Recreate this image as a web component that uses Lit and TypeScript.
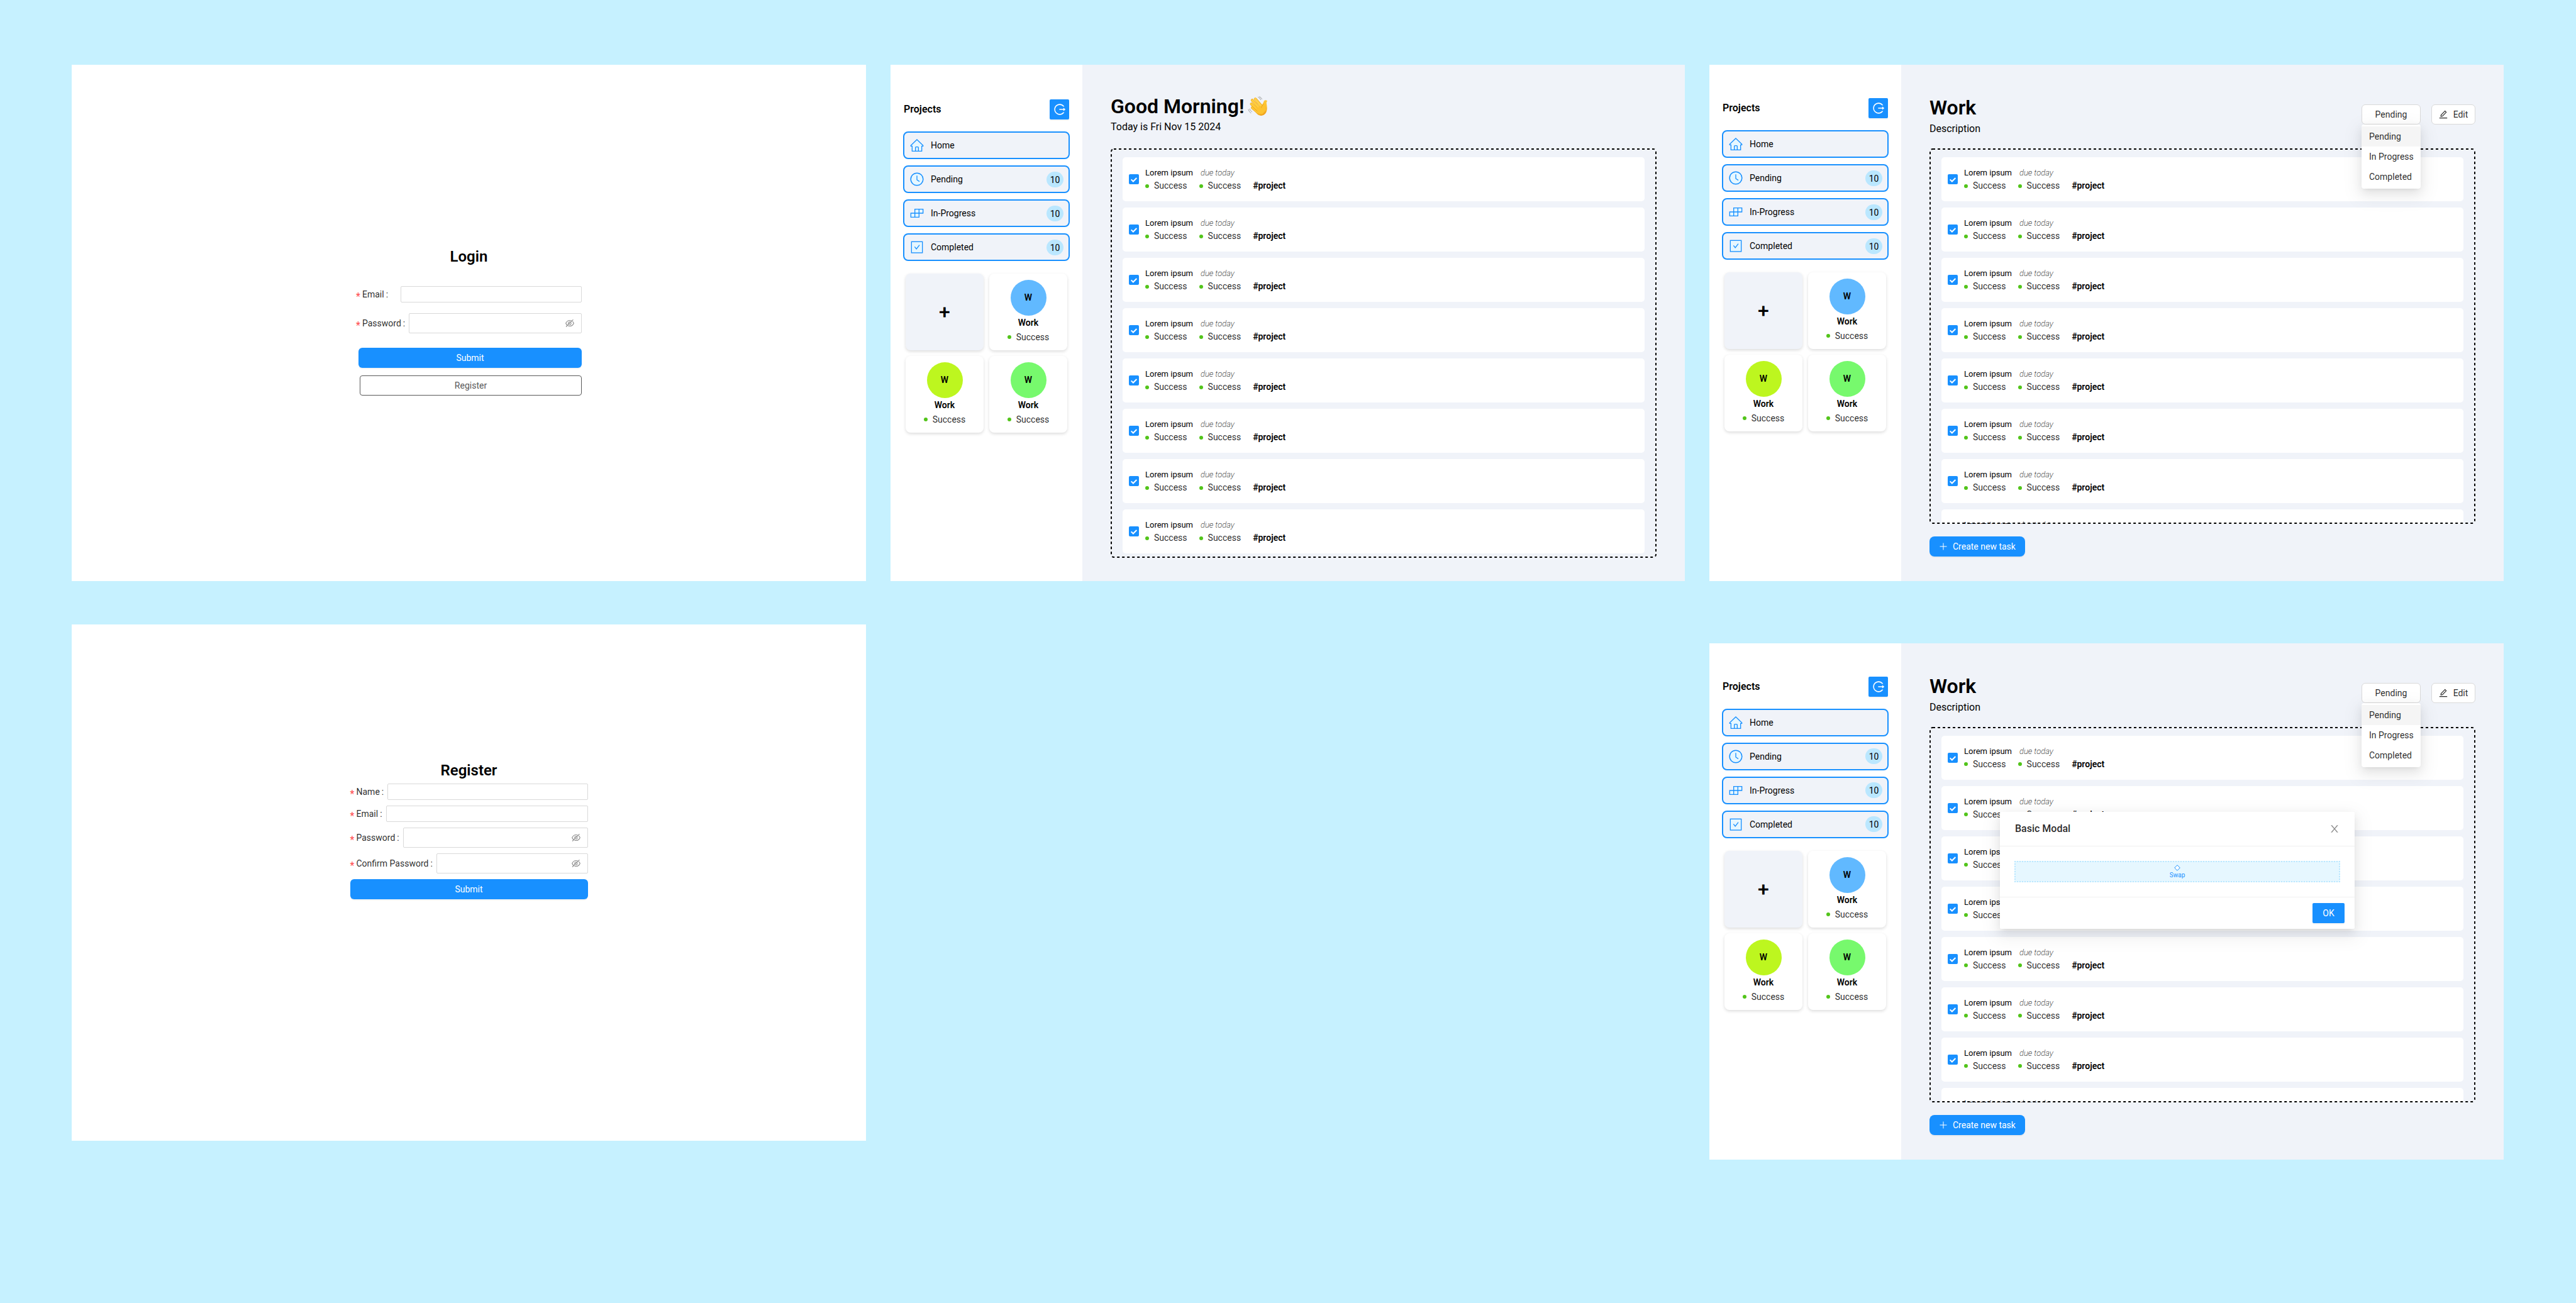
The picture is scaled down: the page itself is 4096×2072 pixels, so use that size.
import { LitElement, html, css, svg, nothing } from "lit";
import { customElement, property } from "lit/decorators.js";
import { classMap } from "lit/directives/class-map.js";

const base = css`
  *,
  *::before,
  *::after {
    box-sizing: border-box;
  }
  :host {
    display: block;
    font-family: Roboto, "Liberation Sans", sans-serif;
    font-size: 14px;
    line-height: 22px;
    color: #000;
  }
  h1,
  h2,
  h3,
  p,
  ul {
    margin: 0;
    padding: 0;
  }
  ul {
    list-style: none;
  }
  button,
  input {
    margin: 0;
    padding: 0;
    font: inherit;
    color: inherit;
    background: none;
    border: 0;
  }
  svg {
    display: block;
    flex: none;
  }
  .button {
    height: 32px;
    display: flex;
    align-items: center;
    justify-content: center;
    border-radius: 6px;
  }
  .primary {
    background: #1890ff;
    color: #fff;
    box-shadow: 0 2px 0 rgba(0, 0, 0, 0.04);
  }
`;

/* Icons on the 1024 unit grid */
const glyph = (d: string, size: number) => html`<svg
  width=${size}
  height=${size}
  viewBox="64 64 896 896"
  fill="currentColor"
  aria-hidden="true"
>
  <path d=${d}></path>
</svg>`;

const EYE_OFF =
  "M942.2 486.2Q889.47 375.11 816.7 305l-50.88 50.88C807.31 395.53 843.45 447.4 874.7 512 791.5 684.2 673.4 766 512 766q-72.67 0-133.87-22.38L323 798.75Q408 838 512 838q288.3 0 430.2-300.3a60.29 60.29 0 000-51.5zm-63.57-320.64L836 122.88a8 8 0 00-11.32 0L715.31 232.2Q624.86 186 512 186q-288.3 0-430.2 300.3a60.3 60.3 0 000 51.5q56.69 119.4 136.5 191.41L112.48 835a8 8 0 000 11.31L155.17 889a8 8 0 0011.31 0l712.15-712.12a8 8 0 000-11.32zM149.3 512C232.6 339.8 350.7 258 512 258c54.54 0 104.13 9.36 149.12 28.39l-70.3 70.3a176 176 0 00-238.13 238.13l-83.42 83.42C223.1 637.49 183.3 582.28 149.3 512zm246.7 0a112.11 112.11 0 01146.2-106.69L401.31 546.2A112 112 0 01396 512z M508 624c-3.46 0-6.87-.16-10.25-.47l-52.82 52.82a176.09 176.09 0 00227.42-227.42l-52.82 52.82c.31 3.38.47 6.79.47 10.25a111.94 111.94 0 01-112 112z";
const EDIT =
  "M257.7 752c2 0 4-.2 6-.5L431.9 722c2-.4 3.9-1.3 5.3-2.8l423.9-423.9a9.96 9.96 0 000-14.1L694.9 114.9c-1.9-1.9-4.4-2.9-7.1-2.9s-5.2 1-7.1 2.9L256.8 538.8c-1.5 1.5-2.4 3.3-2.8 5.3l-29.5 168.2a33.5 33.5 0 009.4 29.8c6.6 6.4 14.9 9.9 23.8 9.9zm67.4-174.4L687.8 215l73.3 73.3-362.7 362.6-88.9 15.7 15.6-89zM880 836H144c-17.7 0-32 14.3-32 32v36c0 4.4 3.6 8 8 8h784c4.4 0 8-3.6 8-8v-36c0-17.7-14.3-32-32-32z";
const CLOSE =
  "M563.8 512l262.5-312.9c4.4-5.2.7-13.1-6.1-13.1h-79.8c-4.7 0-9.2 2.1-12.3 5.7L511.6 449.8 295.1 191.7c-3-3.6-7.5-5.7-12.3-5.7H203c-6.8 0-10.5 7.9-6.1 13.1L459.4 512 196.9 824.9A7.95 7.95 0 00203 838h79.8c4.7 0 9.2-2.1 12.3-5.7l216.5-258.1 216.5 258.1c3 3.6 7.5 5.7 12.3 5.7h79.8c6.8 0 10.5-7.9 6.1-13.1L563.8 512z";
const LOGOUT =
  "M868 732h-70.3c-4.8 0-9.3 2.1-12.3 5.8-7 8.5-14.5 16.7-22.4 24.5a353.84 353.84 0 01-112.7 75.9A352.8 352.8 0 01512.4 866c-47.9 0-94.3-9.4-137.9-27.8a353.84 353.84 0 01-112.7-75.9 353.28 353.28 0 01-76-112.5C167.3 606.2 158 559.9 158 512s9.4-94.2 27.8-137.8c17.8-42.1 43.4-80 76-112.5s70.5-58.1 112.7-75.9c43.6-18.4 90-27.8 137.9-27.8 47.9 0 94.3 9.3 137.9 27.8 42.2 17.8 80.1 43.4 112.7 75.9 7.9 7.9 15.3 16.1 22.4 24.5 3 3.7 7.6 5.8 12.3 5.8H868c6.3 0 10.2-7 6.7-12.3C798 160.5 663.8 81.6 511.3 82 271.7 82.6 79.6 277.1 82 516.4 84.4 751.9 276.2 942 512.4 942c152.1 0 285.7-78.8 362.3-197.7 3.4-5.3-.4-12.3-6.7-12.3zm88.9-226.3L815 393.7c-5.3-4.2-13-.4-13 6.3v76H488c-4.4 0-8 3.6-8 8v56c0 4.4 3.6 8 8 8h314v76c0 6.7 7.8 10.5 13 6.3l141.9-112a8 8 0 000-12.6z";

/* Two-tone navigation icons on a 72 unit grid */
const NAV_ICONS: Record<string, unknown> = {
  home: svg`<path d="M36 9L65 37V40H59V64H13V40H7V37Z" fill="#e6f7ff" stroke="#1890ff" stroke-width="4"/>
    <path d="M29 64V47Q29 44 32 44H40Q43 44 43 47V64" fill="none" stroke="#1890ff" stroke-width="4"/>`,
  clock: svg`<circle cx="36" cy="36" r="29.5" fill="#e6f7ff" stroke="#1890ff" stroke-width="4.5"/>
    <path d="M36 19V39L48 47" fill="none" stroke="#1890ff" stroke-width="4"/>`,
  blocks: svg`<path d="M26 17H65V36H46V55H7V36H26Z" fill="#e6f7ff" stroke="#1890ff" stroke-width="4"/>
    <path d="M46 17V36H26V55" fill="none" stroke="#1890ff" stroke-width="4"/>`,
  check: svg`<rect x="10" y="10" width="52" height="53" fill="#e6f7ff" stroke="#1890ff" stroke-width="4"/>
    <path d="M25 34L33.500 45L48 26" fill="none" stroke="#1890ff" stroke-width="4"/>`,
};

const NAV = [
  { icon: "home", label: "Home", count: 0 },
  { icon: "clock", label: "Pending", count: 10 },
  { icon: "blocks", label: "In-Progress", count: 10 },
  { icon: "check", label: "Completed", count: 10 },
];

@customElement("auth-form")
class AuthForm extends LitElement {
  @property() heading = "";
  @property() variant = "login";

  static styles = [
    base,
    css`
      .page {
        aspect-ratio: 1280 / 832;
        min-height: 0;
        background: #fff;
        display: flex;
        justify-content: center;
        align-items: flex-start;
      }
      form {
        display: flex;
        flex-direction: column;
      }
      .login {
        width: 359px;
        padding-top: 291px;
      }
      .register {
        width: 378px;
        padding-top: 218px;
      }
      h2 {
        font-size: 24px;
        line-height: 28px;
        font-weight: 600;
        text-align: center;
      }
      .fields {
        display: flex;
        flex-direction: column;
      }
      .login .fields {
        gap: 17px;
        margin: 33px 0 23px;
      }
      .register .fields {
        gap: 9px;
        margin: 7px 0 9px;
      }
      .field {
        display: flex;
        align-items: center;
        gap: 6px;
      }
      .field label {
        display: flex;
        align-items: center;
        color: rgba(0, 0, 0, 0.85);
      }
      .mark {
        width: 10px;
        height: 14px;
        font-size: 16px;
        color: #ff4d4f;
      }
      .colon {
        margin-left: 3px;
      }
      .login .short label {
        padding-right: 14px;
      }
      .box {
        flex: 1;
        min-width: 0;
        height: 26px;
        display: flex;
        align-items: center;
        border: 1px solid #d9d9d9;
        border-radius: 2px;
        padding: 0 11px;
      }
      .box.tall {
        height: 32px;
      }
      .box input {
        flex: 1;
        min-width: 0;
        height: 22px;
        outline: 0;
      }
      .eye {
        color: rgba(0, 0, 0, 0.45);
      }
      .actions {
        display: flex;
        flex-direction: column;
        gap: 12px;
      }
      .login .actions .primary {
        margin-left: 4px;
      }
      .outline {
        margin-left: 6px;
        border: 1px solid #595959;
        border-radius: 4px;
        color: #595959;
      }
    `,
  ];

  private field(name: string, secret: boolean) {
    const id = name.toLowerCase().replace(" ", "-");
    return html`<div class=${classMap({ field: true, short: !secret })}>
      <label for=${id}><span class="mark">*</span>${name}<span class="colon">:</span></label>
      <div class=${classMap({ box: true, tall: secret })}>
        <input id=${id} type=${secret ? "password" : "text"} required />
        ${secret
          ? html`<button class="eye" type="button" aria-label="Show password">${glyph(EYE_OFF, 14)}</button>`
          : nothing}
      </div>
    </div>`;
  }

  render() {
    const login = this.variant === "login";
    return html`<section class="page">
      <form class=${this.variant} @submit=${(e: Event) => e.preventDefault()}>
        <h2>${this.heading}</h2>
        <div class="fields">
          ${login ? nothing : this.field("Name", false)} ${this.field("Email", false)}
          ${this.field("Password", true)} ${login ? nothing : this.field("Confirm Password", true)}
        </div>
        <div class="actions">
          <button class="button primary" type="submit">Submit</button>
          ${login ? html`<button class="button outline" type="button">Register</button>` : nothing}
        </div>
      </form>
    </section>`;
  }
}

@customElement("project-sidebar")
class ProjectSidebar extends LitElement {
  static styles = [
    base,
    css`
      :host {
        flex: none;
        width: 305px;
        background: #fff;
      }
      .inner {
        padding: var(--sidebar-top, 55px) 20px 0;
      }
      header {
        display: flex;
        justify-content: space-between;
        align-items: center;
        padding: 0 1px;
      }
      h2 {
        font-size: 16px;
        line-height: 20px;
        font-weight: 600;
      }
      .logout {
        width: 31px;
        border-radius: 2px;
      }
      nav {
        display: flex;
        flex-direction: column;
        gap: 10px;
        margin-top: 19px;
      }
      nav a {
        height: 44px;
        display: flex;
        align-items: center;
        gap: 10px;
        padding: 0 8px;
        border: 2px solid #1890ff;
        border-radius: 8px;
        background: #f0f3f9;
        color: #000;
        text-decoration: none;
      }
      .label {
        flex: 1;
      }
      .count {
        width: 27px;
        height: 25px;
        line-height: 26px;
        border-radius: 13px;
        background: #bae7ff;
        text-align: center;
      }
      .cards {
        display: grid;
        grid-template-columns: 1fr 1fr;
        gap: 9px;
        margin: 20px 4px 0;
      }
      .card {
        height: 122px;
        padding-top: 10px;
        display: flex;
        flex-direction: column;
        align-items: center;
        border-radius: 8px;
        background: #fff;
        box-shadow: 0 2px 5px rgba(0, 0, 0, 0.14);
      }
      .add {
        padding: 0;
        justify-content: center;
        background: #f0f3f9;
        font-size: 32px;
        font-weight: 500;
      }
      .avatar {
        width: 57px;
        height: 57px;
        line-height: 57px;
        border-radius: 50%;
        text-align: center;
        font-weight: 600;
      }
      .blue {
        background: #61b9ff;
      }
      .lime {
        background: #bdf61f;
      }
      .green {
        background: #77f96d;
      }
      h3 {
        font-size: 14px;
        line-height: 22px;
        font-weight: 600;
      }
      .status {
        display: flex;
        align-items: center;
        gap: 8px;
        line-height: 24px;
        color: rgba(0, 0, 0, 0.85);
      }
      .dot {
        width: 6px;
        height: 6px;
        border-radius: 50%;
        background: #52c41a;
      }
    `,
  ];

  render() {
    return html`<div class="inner">
      <header>
        <h2>Projects</h2>
        <button class="button primary logout" aria-label="Log out">${glyph(LOGOUT, 18)}</button>
      </header>
      <nav>
        ${NAV.map(
          (n) => html`<a href="#">
            <svg width="24" height="24" viewBox="0 0 72 72" aria-hidden="true">${NAV_ICONS[n.icon]}</svg>
            <span class="label">${n.label}</span>
            ${n.count ? html`<span class="count">${n.count}</span>` : nothing}
          </a>`
        )}
      </nav>
      <div class="cards">
        <button class="card add">+</button>
        ${["blue", "lime", "green"].map(
          (tone) => html`<article class="card">
            <div class="avatar ${tone}">W</div>
            <h3>Work</h3>
            <div class="status"><span class="dot"></span>Success</div>
          </article>`
        )}
      </div>
    </div>`;
  }
}

@customElement("task-list")
class TaskList extends LitElement {
  static styles = [
    base,
    css`
      :host {
        flex: 1 1 0;
        min-height: 0;
        position: relative;
        overflow: hidden;
      }
      .outline {
        position: absolute;
        inset: 0;
        width: 100%;
        height: 100%;
        pointer-events: none;
      }
      .outline rect {
        width: calc(100% - 2px);
        height: calc(100% - 2px);
      }
      ul {
        display: flex;
        flex-direction: column;
        gap: 10px;
        padding: 14px 19px 0;
      }
      li {
        flex: none;
        height: 70px;
        display: flex;
        align-items: center;
        gap: 10px;
        padding: 0 10px;
        border-radius: 5px;
        background: #fff;
      }
      .tick {
        display: grid;
      }
      .tick > * {
        grid-area: 1 / 1;
      }
      .tick input {
        appearance: none;
        width: 16px;
        height: 16px;
        border-radius: 2px;
        background: #1890ff;
      }
      .tick svg {
        pointer-events: none;
      }
      .line {
        display: flex;
        align-items: center;
        line-height: 21px;
      }
      .name {
        gap: 12px;
        font-size: 13px;
      }
      .tags {
        gap: 19px;
      }
      .due {
        font-style: italic;
        font-weight: 200;
      }
      .status {
        display: flex;
        align-items: center;
        gap: 8px;
        color: rgba(0, 0, 0, 0.85);
      }
      .dot {
        width: 6px;
        height: 6px;
        border-radius: 50%;
        background: #52c41a;
      }
      .project {
        font-weight: 600;
      }
    `,
  ];

  render() {
    return html`<ul>
        ${Array.from(
          { length: 8 },
          (_, i) => html`<li>
            <span class="tick">
              <input id="task-${i}" type="checkbox" checked />
              <svg width="16" height="16" viewBox="0 0 48 48" aria-hidden="true">
                <path d="M11 25L20.500 34.500L37 18" fill="none" stroke="#fff" stroke-width="6" />
              </svg>
            </span>
            <div>
              <div class="line name">
                <label for="task-${i}">Lorem ipsum</label><span class="due">due today</span>
              </div>
              <div class="line tags">
                <span class="status"><span class="dot"></span>Success</span>
                <span class="status"><span class="dot"></span>Success</span>
                <span class="project">#project</span>
              </div>
            </div>
          </li>`
        )}
      </ul>
      <svg class="outline" aria-hidden="true">
        <rect x="1" y="1" rx="4" fill="none" stroke="#000" stroke-width="2" stroke-dasharray="4 4"></rect>
      </svg>`;
  }
}

@customElement("waving-hand")
class WavingHand extends LitElement {
  static styles = css`
    :host {
      display: block;
    }
    svg {
      display: block;
    }
  `;

  render() {
    return html`<svg width="32" height="32" viewBox="0 0 98 98" fill="none" stroke-linecap="round" role="img" aria-label="Waving hand">
      <defs>
        <linearGradient id="skin" x1="20" y1="10" x2="70" y2="96" gradientUnits="userSpaceOnUse">
          <stop offset="0" stop-color="#ffd24a" />
          <stop offset="0.7" stop-color="#fdc12f" />
          <stop offset="1" stop-color="#ee9f1d" />
        </linearGradient>
      </defs>
      <path
        d="M28 58L48 48L66 46C72 40 75 34 78 26C80 19 89 17 94 22C96 25 91 27 91 33C93 46 96 58 92 72C88 88 72 99 56 93C47 90 38 78 28 64Z"
        fill="url(#skin)"
      />
      <path d="M22 56L48 78" stroke="#e59a1c" stroke-width="13" />
      <path d="M22 56L48 78" stroke="#ffc834" stroke-width="10.500" />
      <path d="M18 38L52 70" stroke="#e59a1c" stroke-width="14" />
      <path d="M18 38L54 70" stroke="#ffca38" stroke-width="11.500" />
      <path d="M22 20L60 62" stroke="#e59a1c" stroke-width="14" />
      <path d="M22 20L62 64" stroke="#ffcd3e" stroke-width="11.500" />
      <path d="M37 14L68 50" stroke="#e59a1c" stroke-width="14" />
      <path d="M37 14L70 54" stroke="#ffd148" stroke-width="11.500" />
      <path d="M45 62L62 50L78 46L86 66L70 84L54 82Z" fill="#fdc331" stroke="#fdc331" stroke-width="6" />
      <path d="M66 56C68 47 73 45 77 38" stroke="#e0931a" stroke-width="2" />
      <path d="M54 4Q63 8 66 17M60 2Q69 6 72 14" stroke="#777" stroke-width="2" transform="translate(-3 0)" />
      <path d="M3 65Q6 76 15 82M9 62Q12 71 20 76" stroke="#777" stroke-width="2" />
    </svg>`;
  }
}

@customElement("project-page")
class ProjectPage extends LitElement {
  @property() variant = "home";
  @property({ type: Boolean }) modal = false;

  static styles = [
    base,
    css`
      .page {
        position: relative;
        aspect-ratio: 1280 / 832;
        min-height: 0;
        display: flex;
        background: #f0f3f9;
      }
      .work {
        --sidebar-top: 53px;
      }
      main {
        flex: 1;
        min-width: 0;
        display: flex;
        flex-direction: column;
        padding: 46px 45px 37px;
      }
      .work main {
        padding: 48px 45px 39px;
      }
      header {
        display: flex;
        justify-content: space-between;
        margin-bottom: 24px;
      }
      .work header {
        margin-bottom: 21px;
      }
      h1 {
        display: flex;
        align-items: center;
        gap: 6px;
        font-size: 32px;
        line-height: 40px;
        font-weight: 600;
      }
      .sub {
        margin-top: 3px;
        font-size: 16px;
        line-height: 20px;
      }
      .work .sub {
        margin-top: 4px;
      }
      .actions {
        display: flex;
        align-items: flex-start;
        gap: 17px;
        margin-top: 15px;
        color: rgba(0, 0, 0, 0.85);
      }
      .plain {
        gap: 9px;
        background: #fff;
        border: 1px solid #d9d9d9;
      }
      .edit {
        width: 70px;
      }
      .dropdown {
        position: relative;
        width: 94px;
      }
      .dropdown .plain {
        width: 100%;
      }
      .menu {
        position: absolute;
        z-index: 1;
        top: 100%;
        left: 0;
        right: 0;
        padding: 3px 0;
        border-radius: 4px;
        background: #fff;
        box-shadow:
          0 3px 6px -4px rgba(0, 0, 0, 0.12),
          0 6px 16px rgba(0, 0, 0, 0.08),
          0 9px 28px 8px rgba(0, 0, 0, 0.05);
      }
      .menu button {
        display: block;
        width: 100%;
        height: 32px;
        padding-left: 12px;
        text-align: left;
      }
      .menu .on {
        background: #f5f5f5;
      }
      .create {
        align-self: flex-start;
        gap: 8px;
        margin-top: 20px;
        padding: 0 15px;
        border-radius: 8px;
      }
      .modal {
        position: absolute;
        z-index: 2;
        top: 268px;
        left: 462px;
        width: 564px;
        border-radius: 2px;
        background: #fff;
        color: rgba(0, 0, 0, 0.85);
        box-shadow:
          0 3px 6px -4px rgba(0, 0, 0, 0.12),
          0 6px 16px rgba(0, 0, 0, 0.08),
          0 9px 28px 8px rgba(0, 0, 0, 0.05);
      }
      .modal-head {
        height: 55px;
        display: flex;
        align-items: center;
        justify-content: space-between;
        padding: 0 24px;
        border-bottom: 1px solid #f0f0f0;
      }
      .modal-head h2 {
        font-size: 16px;
        line-height: 24px;
        font-weight: 500;
      }
      .close {
        color: rgba(0, 0, 0, 0.45);
      }
      .modal-body {
        padding: 23px;
      }
      .swap {
        height: 34px;
        display: flex;
        flex-direction: column;
        align-items: center;
        gap: 1px;
        padding-top: 4px;
        border: 2px dotted #bae7ff;
        background: #e6f7ff;
        color: #1890ff;
        font-size: 10px;
        line-height: 12px;
      }
      .modal-foot {
        display: flex;
        justify-content: flex-end;
        padding: 9px 16px;
        border-top: 1px solid #f0f0f0;
      }
      .ok {
        width: 51px;
        border-radius: 2px;
      }
    `,
  ];

  private renderModal() {
    return html`<div class="modal" role="dialog" aria-label="Basic Modal">
      <div class="modal-head">
        <h2>Basic Modal</h2>
        <button class="close" aria-label="Close">${glyph(CLOSE, 16)}</button>
      </div>
      <div class="modal-body">
        <div class="swap">
          <svg width="10" height="10" viewBox="0 0 10 10" aria-hidden="true">
            <path d="M5 .7L9.300 5L5 9.300L.7 5Z" fill="#fff" stroke="currentColor" />
          </svg>
          Swap
        </div>
      </div>
      <div class="modal-foot"><button class="button primary ok">OK</button></div>
    </div>`;
  }

  render() {
    const home = this.variant === "home";
    return html`<section class="page ${this.variant}">
      <project-sidebar></project-sidebar>
      <main>
        <header>
          <div>
            <h1>${home ? html`Good Morning!<waving-hand></waving-hand>` : "Work"}</h1>
            <p class="sub">${home ? "Today is Fri Nov 15 2024" : "Description"}</p>
          </div>
          ${home
            ? nothing
            : html`<div class="actions">
                <div class="dropdown">
                  <button class="button plain" aria-haspopup="menu" aria-expanded="true">Pending</button>
                  <div class="menu" role="menu">
                    ${["Pending", "In Progress", "Completed"].map(
                      (item, i) => html`<button role="menuitem" class=${classMap({ on: i === 0 })}>${item}</button>`
                    )}
                  </div>
                </div>
                <button class="button plain edit">${glyph(EDIT, 14)}Edit</button>
              </div>`}
        </header>
        <task-list></task-list>
        ${home
          ? nothing
          : html`<button class="button primary create">
              <svg width="14" height="14" viewBox="0 0 14 14" aria-hidden="true">
                <path d="M7 1.500V12.500M1.500 7H12.500" stroke="currentColor" />
              </svg>
              Create new task
            </button>`}
      </main>
      ${this.modal ? this.renderModal() : nothing}
    </section>`;
  }
}

@customElement("app-root")
class AppRoot extends LitElement {
  static styles = [
    base,
    css`
      .board {
        min-height: 100vh;
        display: grid;
        grid-template-columns: repeat(3, minmax(0, 1fr));
        gap: 39px;
        align-items: start;
        padding: 103px 115px 39px 114px;
        background: #c6f1ff;
      }
      .column {
        display: flex;
        flex-direction: column;
      }
      .auth {
        gap: 69px;
      }
      .projects {
        gap: 99px;
      }
    `,
  ];

  render() {
    return html`<div class="board">
      <div class="column auth">
        <auth-form variant="login" heading="Login"></auth-form>
        <auth-form variant="register" heading="Register"></auth-form>
      </div>
      <div class="column"><project-page variant="home"></project-page></div>
      <div class="column projects">
        <project-page variant="work"></project-page>
        <project-page variant="work" modal></project-page>
      </div>
    </div>`;
  }
}
